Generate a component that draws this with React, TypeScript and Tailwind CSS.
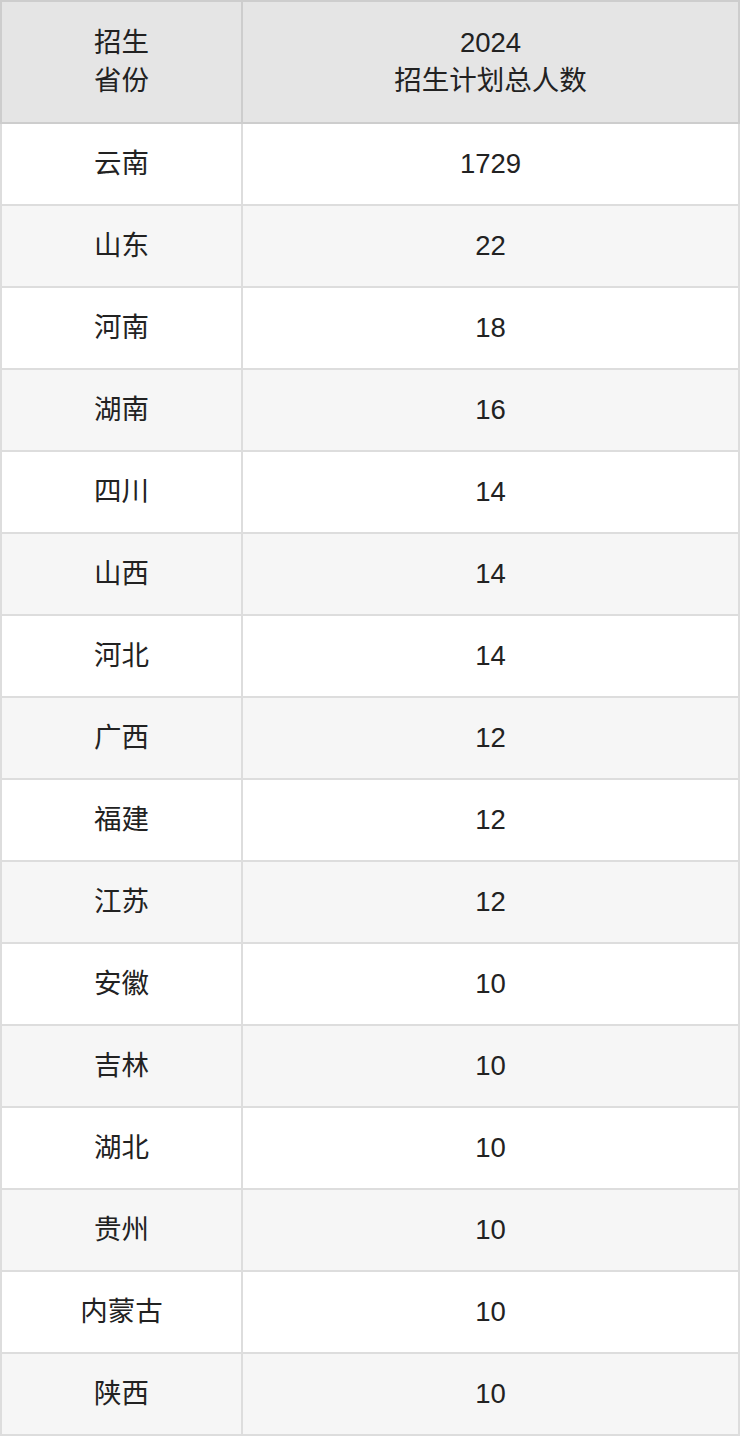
import React from "react";

const rows: [string, string][] = [
  ["云南", "1729"],
  ["山东", "22"],
  ["河南", "18"],
  ["湖南", "16"],
  ["四川", "14"],
  ["山西", "14"],
  ["河北", "14"],
  ["广西", "12"],
  ["福建", "12"],
  ["江苏", "12"],
  ["安徽", "10"],
  ["吉林", "10"],
  ["湖北", "10"],
  ["贵州", "10"],
  ["内蒙古", "10"],
  ["陕西", "10"],
];

export default function App() {
  return (
    <div
      className="w-[740px] text-[27.5px] text-[#222]"
      style={{ fontFamily: '"Liberation Sans", "Noto Sans CJK SC", sans-serif' }}
    >
      <div className="flex h-[124px] bg-[#e5e5e5] border-y-2 border-[#cdcdcd]">
        <div className="w-[243px] shrink-0 flex flex-col items-center justify-center border-x-2 border-[#cdcdcd] leading-[38px]">
          <span>招生</span>
          <span>省份</span>
        </div>
        <div className="flex-1 flex flex-col items-center justify-center border-r-2 border-[#cdcdcd] leading-[38px]">
          <span>2024</span>
          <span>招生计划总人数</span>
        </div>
      </div>
      {rows.map(([prov, num], i) => (
        <div
          key={prov}
          className={`flex h-[82px] border-b-2 border-[#dddddd] ${i % 2 === 1 ? "bg-[#f6f6f6]" : "bg-white"}`}
        >
          <div className="w-[243px] shrink-0 flex items-center justify-center border-x-2 border-[#dddddd]">
            {prov}
          </div>
          <div className="flex-1 flex items-center justify-center border-r-2 border-[#dddddd]">
            {num}
          </div>
        </div>
      ))}
    </div>
  );
}
